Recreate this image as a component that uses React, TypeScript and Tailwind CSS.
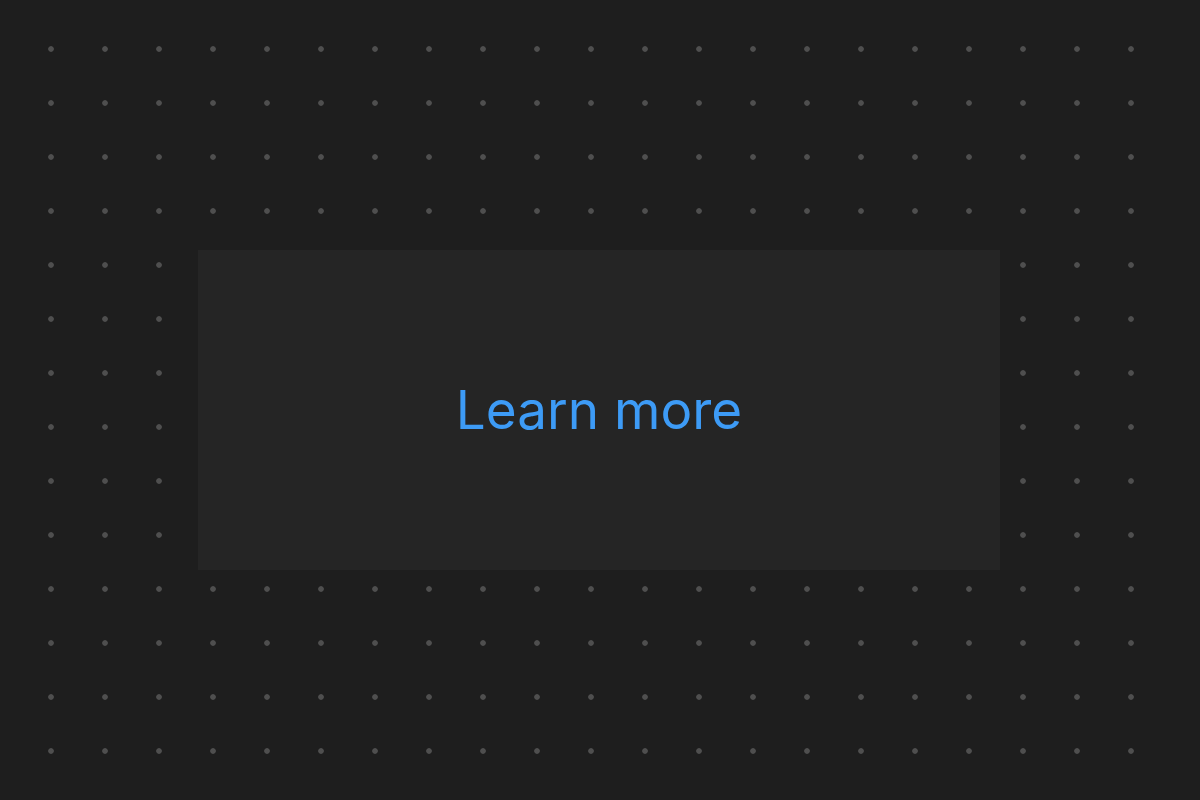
export default function App() {
  return (
    <div className="w-[1200px] h-[800px] bg-[#1e1e1e] overflow-hidden pl-[24px] pt-[21.5px]">
      <div className="w-[1134px] h-[756px] bg-[radial-gradient(circle_at_center,#4f4f4f_0,#4f4f4f_2.4px,transparent_3.2px)] bg-[length:54px_54px]">
        <div className="pt-[228.5px] pl-[174px]">
          <div className="w-[802px] h-[320px] bg-[#252525] flex items-center justify-center">
            <span className="text-[#3d9bf6] text-[53px] leading-none font-['Inter',sans-serif]">Learn more</span>
          </div>
        </div>
      </div>
    </div>
  );
}
